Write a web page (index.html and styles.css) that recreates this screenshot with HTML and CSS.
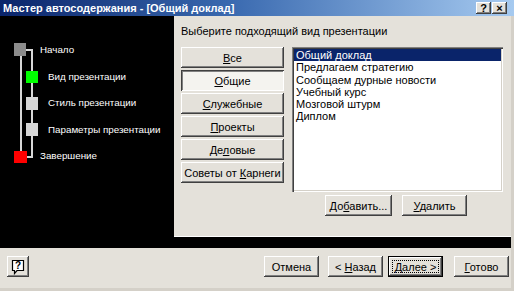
FILE: index.html
```html
<!DOCTYPE html>
<html lang="ru">
<head>
    <meta charset="UTF-8">
    <title>Мастер автосодержания</title>
    <link rel="stylesheet" href="styles.css">
</head>
<body>
    <div class="window">
        <!-- Заголовок окна -->
        <div class="titlebar">
            <span class="title">Мастер автосодержания - [Общий доклад]</span>
            <div class="title-buttons">
                <span class="title-btn">?</span>
                <span class="title-btn">×</span>
            </div>
        </div>

        <div class="frame">
            <div class="main">
                <!-- Шаги мастера -->
                <div class="steps">
                    <svg class="tree" width="40" height="130" viewBox="0 0 40 130">
                        <line x1="21" y1="14" x2="21" y2="114" stroke="#d8d8d8" stroke-width="2"/>
                        <polyline points="25,10 32,10 32,117 26,117" fill="none" stroke="#d8d8d8" stroke-width="2"/>
                        <rect x="14" y="3" width="12" height="13" fill="#8c8c8c"/>
                        <rect x="26" y="31" width="12" height="12" fill="#00ff00"/>
                        <rect x="26" y="57" width="12" height="13" fill="#d6d6d6"/>
                        <rect x="26" y="83" width="12" height="13" fill="#d6d6d6"/>
                        <rect x="14" y="111" width="13" height="12" fill="#ff0000"/>
                    </svg>
                    <ul class="step-list">
                        <li class="step step-main">Начало</li>
                        <li class="step">Вид презентации</li>
                        <li class="step">Стиль презентации</li>
                        <li class="step">Параметры презентации</li>
                        <li class="step step-main">Завершение</li>
                    </ul>
                </div>

                <!-- Выбор вида презентации -->
                <div class="content">
                    <div class="heading">Выберите подходящий вид презентации</div>
                    <div class="chooser">
                        <div class="categories">
                            <button class="btn cat-btn"><u>В</u>се</button>
                            <button class="btn cat-btn pressed"><u>О</u>бщие</button>
                            <button class="btn cat-btn"><u>С</u>лужебные</button>
                            <button class="btn cat-btn"><u>П</u>роекты</button>
                            <button class="btn cat-btn">Де<u>л</u>овые</button>
                            <button class="btn cat-btn">Советы от <u>К</u>арнеги</button>
                        </div>
                        <div class="list-col">
                            <ul class="listbox">
                                <li class="selected">Общий доклад</li>
                                <li>Предлагаем стратегию</li>
                                <li>Сообщаем дурные новости</li>
                                <li>Учебный курс</li>
                                <li>Мозговой штурм</li>
                                <li>Диплом</li>
                            </ul>
                            <div class="list-actions">
                                <button class="btn act-btn add-btn">До<u>б</u>авить...</button>
                                <button class="btn act-btn del-btn"><u>У</u>далить</button>
                            </div>
                        </div>
                    </div>
                </div>
            </div>

            <div class="divider"></div>

            <!-- Кнопки навигации -->
            <div class="footer">
                <button class="btn help-btn" aria-label="Справка">
                    <svg width="14" height="16" viewBox="0 0 14 16">
                        <path d="M1.5 1.5 H12.5 V11.5 H6 L3.5 14.5 V11.5 H1.5 Z" fill="#fff" stroke="#000" stroke-width="1.2"/>
                        <text x="7" y="10" text-anchor="middle" font-family="Liberation Sans, Arial, sans-serif" font-size="10" font-weight="bold">?</text>
                    </svg>
                </button>
                <div class="nav">
                    <button class="btn nav-btn">Отмена</button>
                    <button class="btn nav-btn back-btn">&lt; <u>Н</u>азад</button>
                    <button class="btn nav-btn default-btn"><u>Д</u>алее &gt;</button>
                    <button class="btn nav-btn finish-btn"><u>Г</u>отово</button>
                </div>
            </div>
        </div>
    </div>
</body>
</html>
```

FILE: styles.css
```css
/* Общие настройки */
* {
    box-sizing: border-box;
}

body {
    margin: 0;
    font-family: "Liberation Sans", Arial, sans-serif;
    font-size: 11px;
    color: #000;
    background-color: #d4d0c8;
}

.window {
    width: 514px;
    height: 291px;
    display: flex;
    flex-direction: column;
    background-color: #e4e1da;
}

/* Заголовок */
.titlebar {
    height: 16px;
    flex: none;
    display: flex;
    align-items: center;
    justify-content: space-between;
    padding: 0 7px 0 3px;
    background: linear-gradient(to right, #0a246a 0%, #3a6ab0 45%, #a6caf0 100%);
    color: #fff;
    font-weight: bold;
    font-size: 11px;
}

.title-buttons {
    display: flex;
    gap: 1px;
}

.title-btn {
    width: 15px;
    height: 12px;
    display: flex;
    align-items: center;
    justify-content: center;
    background-color: #e4e1da;
    color: #000;
    font-size: 11px;
    font-weight: bold;
    box-shadow: inset -1px -1px #404040, inset 1px 1px #fff, inset -2px -2px #808080;
}

.frame {
    flex: 1;
    display: flex;
    flex-direction: column;
    border-right: 3px solid #d4d0c8;
    border-bottom: 3px solid #d4d0c8;
}

.main {
    height: 221px;
    display: flex;
}

/* Шаги мастера */
.steps {
    width: 174px;
    flex: none;
    background-color: #000;
    color: #fff;
    font-size: 9.8px;
    display: flex;
    align-items: flex-start;
    padding-top: 24px;
}

.tree {
    flex: none;
}

.step-list {
    list-style: none;
    margin: -3px 0 0;
    padding: 0;
}

.step {
    height: 26.6px;
    line-height: 26.6px;
    padding-left: 8px;
    white-space: nowrap;
}

.step-main {
    padding-left: 0;
}

/* Правая часть */
.content {
    flex: 1;
    padding: 8px 0 0 7px;
    border-bottom: 1px solid #fff;
}

.heading {
    line-height: 14px;
    margin-bottom: 9px;
}

.chooser {
    display: grid;
    grid-template-columns: 103px 211px;
    gap: 8px;
}

.categories {
    display: flex;
    flex-direction: column;
    gap: 2px;
}

/* Кнопки в классическом стиле */
.btn {
    position: relative;
    height: 21px;
    padding: 0;
    border: none;
    background-color: #e4e1da;
    font: inherit;
    color: #000;
    box-shadow: inset -1px -1px #404040, inset 1px 1px #fff, inset -2px -2px #808080;
}

.cat-btn {
    width: 103px;
}

.pressed {
    background-color: #f4f3ef;
    box-shadow: inset 1px 1px #404040, inset -1px -1px #fff, inset 2px 2px #808080;
}

.list-col {
    display: flex;
    flex-direction: column;
    align-items: center;
}

.listbox {
    list-style: none;
    margin: 0;
    width: 211px;
    height: 145px;
    padding: 2px;
    background-color: #fff;
    box-shadow: inset 1px 1px #808080, inset 2px 2px #404040, inset -1px -1px #fff, inset -2px -2px #d4d0c8;
}

.listbox li {
    line-height: 12.3px;
    padding-left: 2px;
    white-space: nowrap;
}

.listbox .selected {
    background-color: #0a246a;
    color: #fff;
}

.list-actions {
    display: flex;
    gap: 10px;
    margin-top: 3px;
    padding-right: 3px;
}

.add-btn {
    width: 67px;
}

.del-btn {
    width: 65px;
}

.divider {
    height: 11px;
    flex: none;
    background-color: #000;
}

/* Нижняя панель */
.footer {
    flex: 1;
    display: flex;
    justify-content: space-between;
    align-items: flex-start;
    padding: 8px 2px 0 7px;
}

.help-btn {
    width: 22px;
    display: flex;
    align-items: center;
    justify-content: center;
}

.nav {
    display: flex;
}

.nav-btn {
    width: 55px;
}

.back-btn {
    margin-left: 9px;
}

.default-btn {
    margin-left: 5px;
    box-shadow: inset 0 0 0 1px #000, inset -2px -2px #404040, inset 2px 2px #fff, inset -3px -3px #808080;
}

.default-btn::after {
    content: "";
    position: absolute;
    top: 4px;
    left: 4px;
    right: 4px;
    bottom: 4px;
    border: 1px dotted #000;
}

.finish-btn {
    margin-left: 11px;
}
```
